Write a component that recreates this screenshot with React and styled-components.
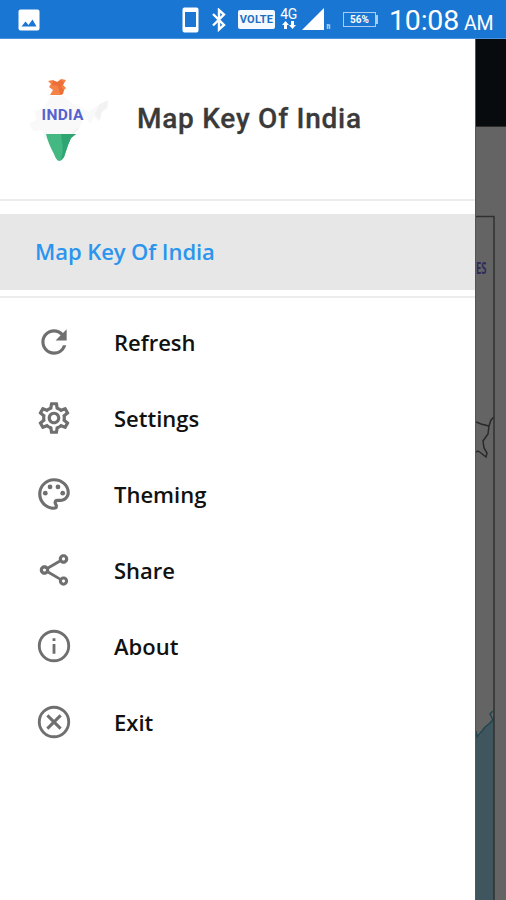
import React from 'react';
import styled, { createGlobalStyle } from 'styled-components';
import {
  MdRefresh,
  MdOutlineSettings,
  MdOutlinePalette,
  MdOutlineShare,
} from 'react-icons/md';

const GlobalStyle = createGlobalStyle`
  * {
    box-sizing: border-box;
  }
  body {
    margin: 0;
    overflow: hidden;
    background: #fff;
  }
`;

const Screen = styled.div`
  width: 506px;
  height: 900px;
  display: flex;
  flex-direction: column;
  overflow: hidden;
  font-family: 'Open Sans', sans-serif;
`;

const StatusBar = styled.header`
  height: 39px;
  flex: none;
  display: flex;
  align-items: center;
  padding: 1px 12px 0 18px;
  background: #1976d2;
  border-bottom: 1px solid #4a92dc;
  color: #fff;
`;

const StatusIcon = styled.svg`
  display: block;
  flex: none;
  margin-left: ${props => props.$gap || 0}px;
`;

const Spacer = styled.div`
  flex: 1;
`;

const VolteBadge = styled.span`
  width: 37px;
  height: 19px;
  margin-left: 10px;
  border-radius: 2px;
  background: #f5faff;
  color: #1e6fc0;
  font: 700 11px/20px Roboto, sans-serif;
  letter-spacing: 0.2px;
  text-align: center;
`;

const Network = styled.div`
  width: 17px;
  height: 23px;
  margin-left: 5px;
  display: flex;
  flex-direction: column;
  align-items: center;
  font: 400 14px/13px Roboto, sans-serif;
  letter-spacing: -0.5px;
`;

const Battery = styled.div`
  width: 33px;
  height: 15px;
  margin-left: 11px;
  border: 1.5px solid #a9cdf1;
  color: #fff;
  font: 700 10px/13px Roboto, sans-serif;
  text-align: center;
`;

const BatteryTip = styled.div`
  width: 2px;
  height: 9px;
  background: #a9cdf1;
`;

const Clock = styled.div`
  width: 105px;
  margin-left: 11px;
  padding-top: 5px;
  font: 400 28.5px/34px Roboto, sans-serif;
  letter-spacing: -0.2px;
  white-space: nowrap;
`;

const Meridiem = styled.span`
  margin-left: 5px;
  font-size: 19.5px;
`;

const Body = styled.div`
  flex: 1;
  display: flex;
  min-height: 0;
`;

const Drawer = styled.nav`
  width: 475px;
  flex: none;
  background: #fff;
`;

const DrawerHeader = styled.div`
  height: 160px;
  display: flex;
  align-items: center;
  padding-left: 25px;
`;

const AppLogo = styled.svg`
  display: block;
  width: 90px;
  height: 100px;
  font-family: Roboto, sans-serif;
`;

const AppTitle = styled.h1`
  margin: 0 0 0 22px;
  color: #3a3a3a;
  font: 500 28px/36px Roboto, sans-serif;
  letter-spacing: 0.75px;
  -webkit-text-stroke: 0.3px #3a3a3a;
`;

const Divider = styled.div`
  height: 2px;
  background: #ececec;
`;

const ActiveItem = styled.div`
  height: 76px;
  margin: 13px 0 6px;
  padding-left: 35px;
  background: #e7e7e7;
  color: #2b95ee;
  font-size: 22px;
  font-weight: 600;
  letter-spacing: -0.07px;
  line-height: 75px;
`;

const Menu = styled.ul`
  margin: 0;
  padding: 6px 0 0;
  list-style: none;
`;

const MenuItem = styled.li`
  height: 76px;
  display: flex;
  align-items: center;
  gap: 41px;
  padding-left: 35px;
  color: #111;
  font-size: 22px;
  font-weight: 600;

  svg {
    width: 38px;
    height: 38px;
    color: #6f6f6f;
  }
`;

const Backdrop = styled.div`
  flex: 1;
  display: flex;
  flex-direction: column;
  border-left: 1px solid #555;
  background: #646464;
`;

const Toolbar = styled.div`
  height: 88px;
  flex: none;
  background: #080b0d;
  border-bottom: 1px solid #2b2b2b;
`;

const MapArt = styled.svg`
  display: block;
  font-family: 'Open Sans', sans-serif;
`;

const InfoIcon = () => (
  <svg viewBox="0 0 24 24" fill="none" stroke="currentColor">
    <circle cx="12" cy="12" r="9.3" strokeWidth="1.8" />
    <path d="M12 10.7v6.2M12 7.1v1.8" strokeWidth="1.8" />
  </svg>
);

const ExitIcon = () => (
  <svg viewBox="0 0 24 24" fill="none" stroke="currentColor">
    <circle cx="12" cy="12" r="9.3" strokeWidth="1.8" />
    <path d="M7.8 7.8l8.4 8.4M16.2 7.8l-8.4 8.4" strokeWidth="1.9" />
  </svg>
);

const items = [
  { label: 'Refresh', Icon: MdRefresh },
  { label: 'Settings', Icon: MdOutlineSettings },
  { label: 'Theming', Icon: MdOutlinePalette },
  { label: 'Share', Icon: MdOutlineShare },
  { label: 'About', Icon: InfoIcon },
  { label: 'Exit', Icon: ExitIcon },
];

const IndiaLogo = () => (
  <AppLogo viewBox="0 0 90 100">
    <path d="M26 27L38 27L48 35L57 39L64 43L72 37L82 32L83 39L77 43L74 53L69 47L65 55L60 47L54 59L45 70H20L17 61L9 62L4 55L11 51L10 42L19 39Z" fill="#f9f9fa" />
    <path d="M75 36l7-3-1 5-5 4-2 7-3-4zM53 59l-8 8" fill="#f2f2f3" stroke="#f2f2f3" strokeWidth="2" />
    <path d="M23 12l5-1 4 2 4-3 5 1-3 5 3 3-3 3-1 4H25l3-5-4-3 2-3z" fill="#f58247" />
    <path d="M28 12l-1 4 6 1 2 8h3l1-4-3-3 3-4-3-3-3 2z" fill="#ed6f38" />
    <path d="M21 65h30l-5 4-3 7-4 12q-2 4-5 4-3-1-5-7-6-11-8-20z" fill="#43b883" />
    <path d="M36 65h15l-5 4-3 7-4 12-3 3q3-12 1-18z" fill="#2fa672" />
    <text x="16.500" y="51" fontSize="15.500" fontWeight="700" fill="#5461ce" textLength="42">INDIA</text>
  </AppLogo>
);

const StatusBarIcons = () => (
  <StatusBar>
    <StatusIcon width="22" height="22" viewBox="0 0 22 22">
      <rect x="0.5" y="0.5" width="21" height="21" rx="2" fill="#fff" />
      <path d="M3.5 17.5l4-5 3 3.5 4-5.500 4 7z" fill="#1976d2" />
    </StatusIcon>
    <Spacer />
    <StatusIcon width="17" height="26" viewBox="0 0 17 26">
      <rect x="0.5" y="0.5" width="16" height="25" rx="2" fill="#fff" />
      <rect x="3" y="5" width="11" height="15" fill="#1976d2" />
    </StatusIcon>
    <StatusIcon width="16" height="24" viewBox="0 0 16 24" $gap={13}>
      <path d="M1 6l11 11-5 4.500V2l5 4.500L1 17.500" fill="none" stroke="#fff" strokeWidth="2.4" />
    </StatusIcon>
    <VolteBadge>VOLTE</VolteBadge>
    <Network>
      4G
      <svg width="16" height="9" viewBox="0 0 16 9">
        <path d="M4.5 0L8 4H6v4H3V4H1zM11.5 8L15 4h-2V0h-3v4H8z" fill="#fff" />
      </svg>
    </Network>
    <StatusIcon width="30" height="23" viewBox="0 0 30 23" $gap={5}>
      <path d="M0 22L22 0v22z" fill="#fff" />
      <path d="M25.5 16v5M25.5 17h2v4" fill="none" stroke="#9fc8ef" strokeWidth="1.5" />
    </StatusIcon>
    <Battery>56%</Battery>
    <BatteryTip />
    <Clock>
      10:08<Meridiem>AM</Meridiem>
    </Clock>
  </StatusBar>
);

const MapBackdrop = () => (
  <Backdrop>
    <Toolbar />
    <MapArt width="30" height="773" viewBox="0 0 30 773">
      <text x="0" y="147" fontSize="16" fontWeight="700" fill="#302b59" textLength="10.5" lengthAdjust="spacingAndGlyphs">ES</text>
      <path d="M0 609l2-2 2 2 3-7 4-4 3-3 4-7v185H0z" fill="#40565f" />
      <path d="M0 604l1 6 5-6 3-4 4-3 4-4-3-6 3-3" fill="none" stroke="#23454f" strokeWidth="1.5" />
      <path d="M0 295l5 2 8 2 2-6 3-3M13 299l-1 8-5 7 1 7 3 5-1 4-5-4-3-2-2 1" fill="none" stroke="#292929" strokeWidth="1.5" />
      <path d="M0 89.500h18V773" fill="none" stroke="#303030" strokeWidth="1.5" />
    </MapArt>
  </Backdrop>
);

const App = () => {
  return (
    <>
      <GlobalStyle />
      <Screen>
        <StatusBarIcons />
        <Body>
          <Drawer>
            <DrawerHeader>
              <IndiaLogo />
              <AppTitle>Map Key Of India</AppTitle>
            </DrawerHeader>
            <Divider />
            <ActiveItem>Map Key Of India</ActiveItem>
            <Divider />
            <Menu>
              {items.map(({ label, Icon }) => (
                <MenuItem key={label}>
                  <Icon />
                  {label}
                </MenuItem>
              ))}
            </Menu>
          </Drawer>
          <MapBackdrop />
        </Body>
      </Screen>
    </>
  );
};

export default App;
